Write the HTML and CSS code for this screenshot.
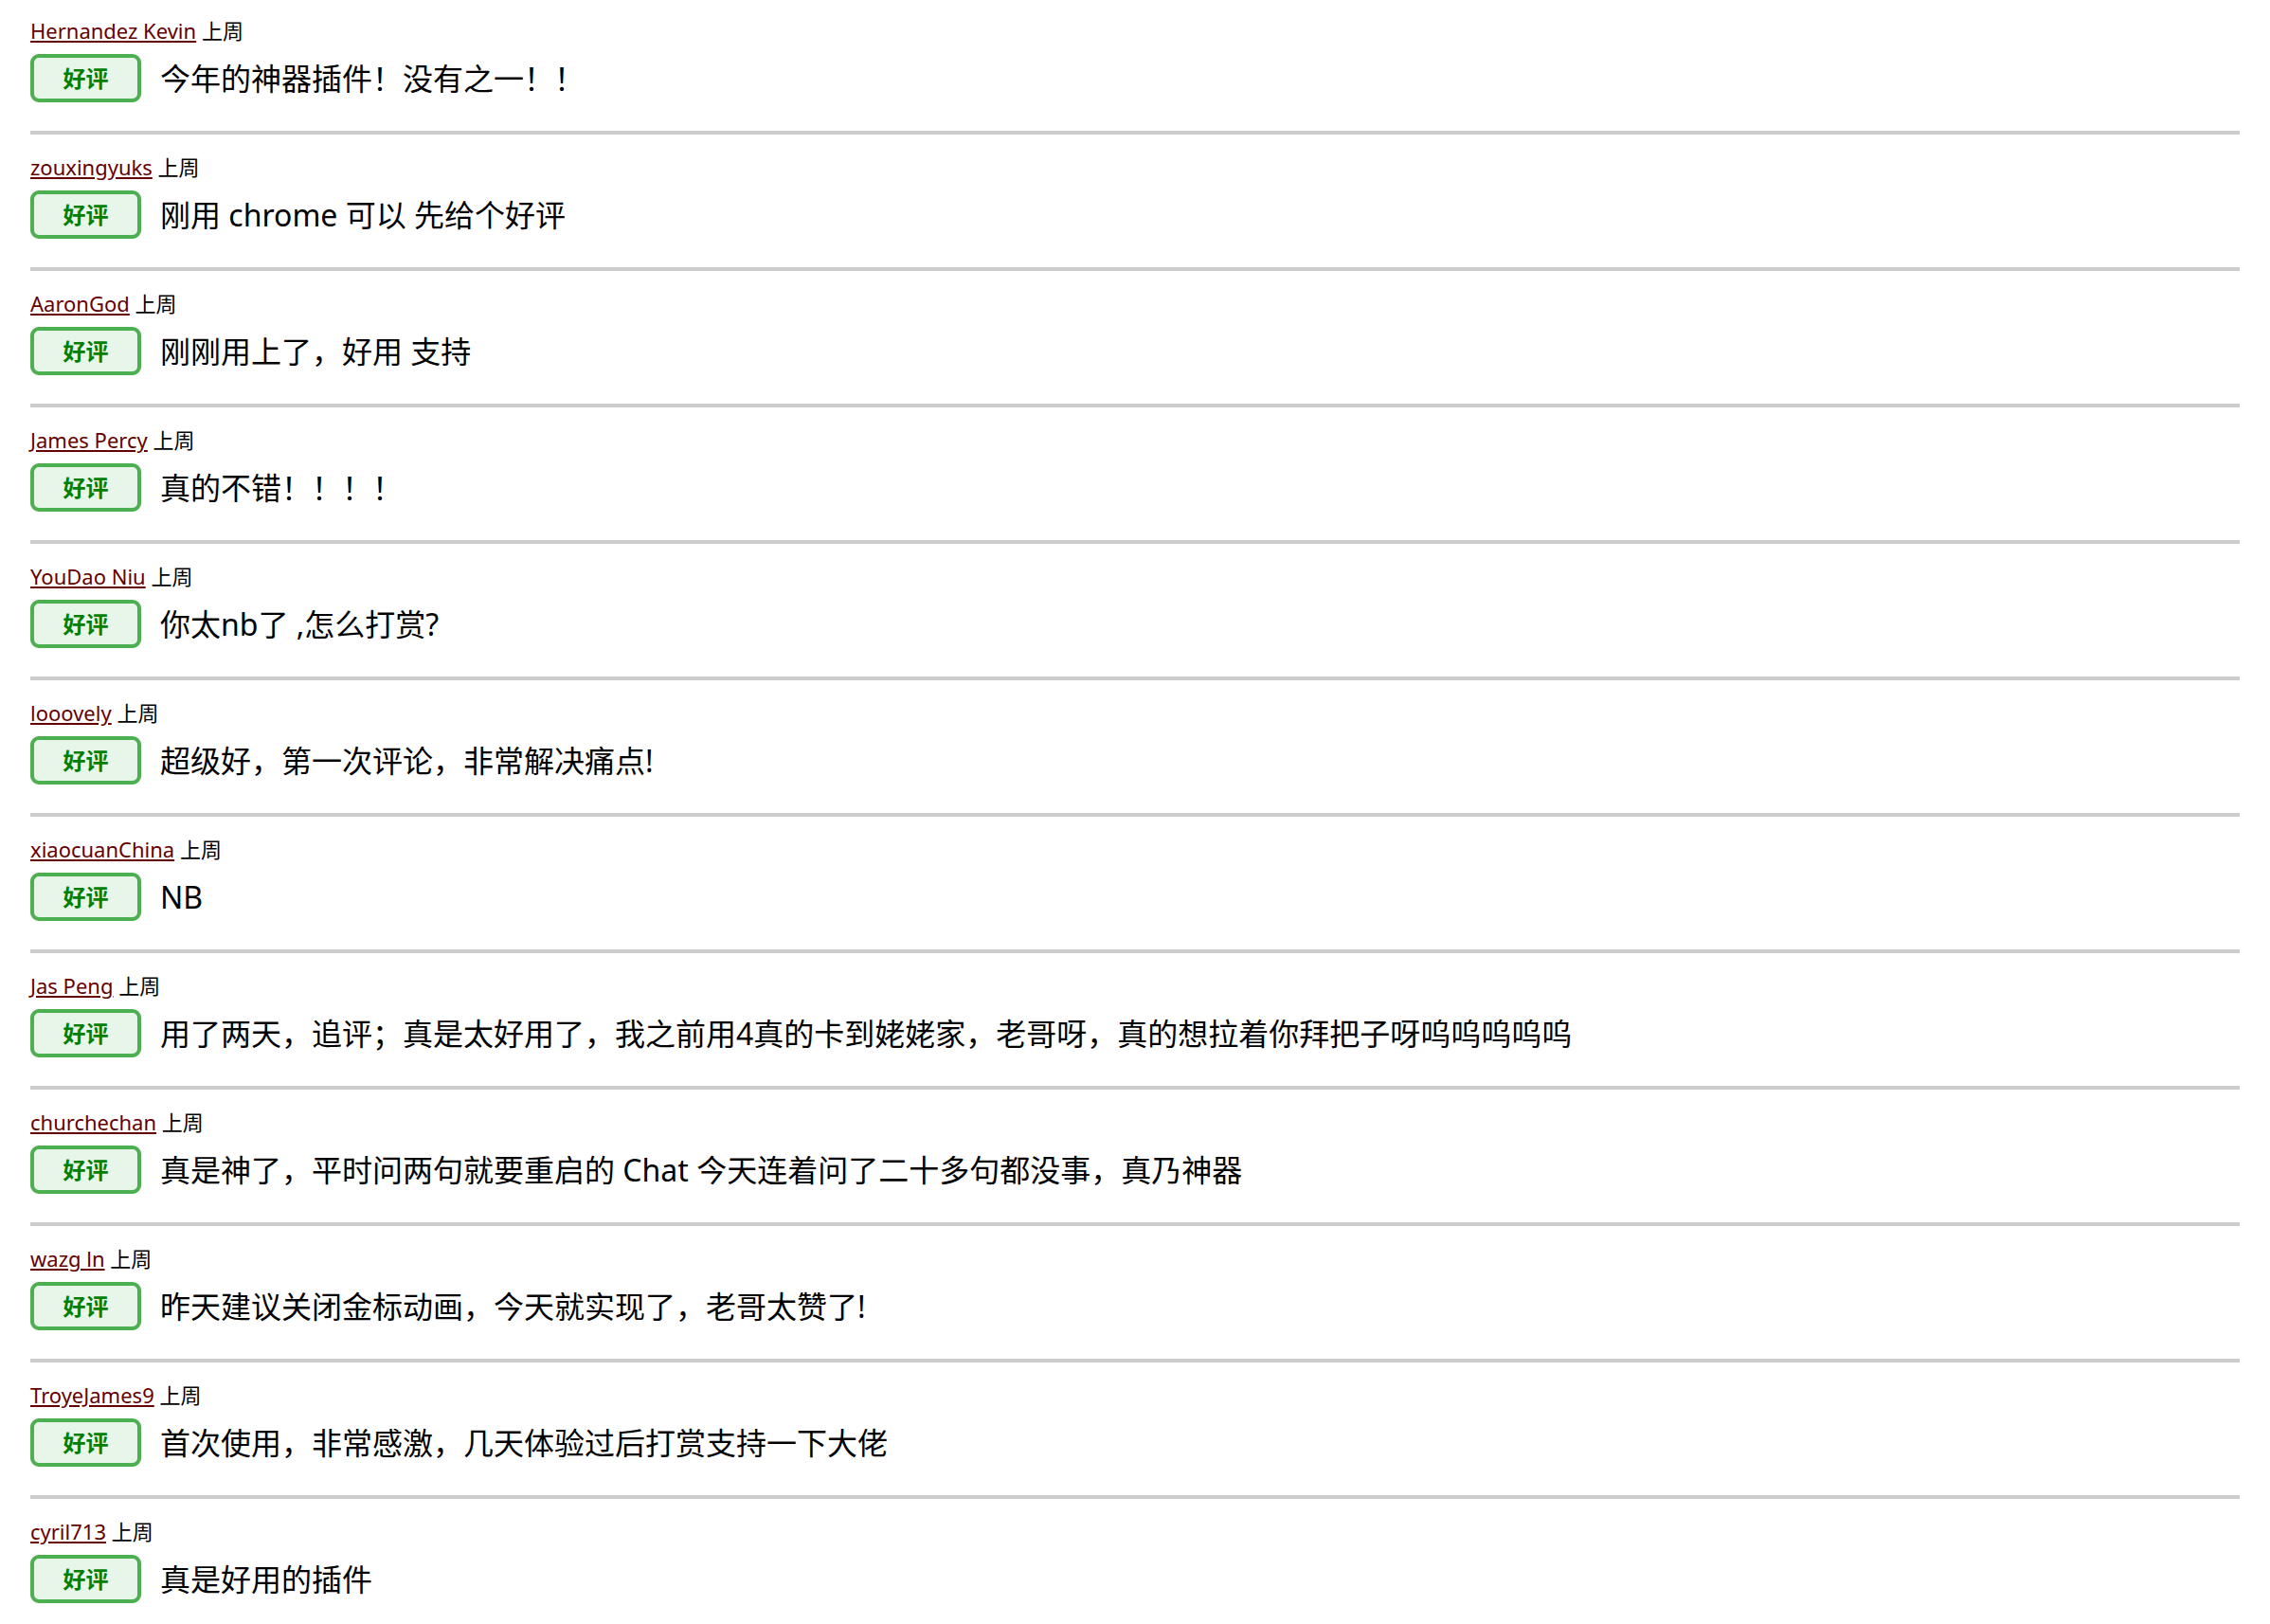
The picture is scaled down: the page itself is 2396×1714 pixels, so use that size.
FILE: index.html
```html
<!DOCTYPE html>
<html lang="zh-CN">
<head>
<meta charset="utf-8">
<title>评价</title>
<link rel="stylesheet" href="styles.css">
</head>
<body>
<div class="reviews">
  <div class="review">
    <div class="meta"><a class="author" href="#">Hernandez Kevin</a> <span class="time">上周</span></div>
    <div class="body"><span class="badge">好评</span><span class="text">今年的神器插件！没有之一！！</span></div>
  </div>
  <div class="review">
    <div class="meta"><a class="author" href="#">zouxingyuks</a> <span class="time">上周</span></div>
    <div class="body"><span class="badge">好评</span><span class="text">刚用 chrome 可以 先给个好评</span></div>
  </div>
  <div class="review">
    <div class="meta"><a class="author" href="#">AaronGod</a> <span class="time">上周</span></div>
    <div class="body"><span class="badge">好评</span><span class="text">刚刚用上了，好用 支持</span></div>
  </div>
  <div class="review">
    <div class="meta"><a class="author" href="#">James Percy</a> <span class="time">上周</span></div>
    <div class="body"><span class="badge">好评</span><span class="text">真的不错！！！！</span></div>
  </div>
  <div class="review">
    <div class="meta"><a class="author" href="#">YouDao Niu</a> <span class="time">上周</span></div>
    <div class="body"><span class="badge">好评</span><span class="text">你太nb了 ,怎么打赏?</span></div>
  </div>
  <div class="review">
    <div class="meta"><a class="author" href="#">looovely</a> <span class="time">上周</span></div>
    <div class="body"><span class="badge">好评</span><span class="text">超级好，第一次评论，非常解决痛点!</span></div>
  </div>
  <div class="review">
    <div class="meta"><a class="author" href="#">xiaocuanChina</a> <span class="time">上周</span></div>
    <div class="body"><span class="badge">好评</span><span class="text">NB</span></div>
  </div>
  <div class="review">
    <div class="meta"><a class="author" href="#">Jas Peng</a> <span class="time">上周</span></div>
    <div class="body"><span class="badge">好评</span><span class="text">用了两天，追评；真是太好用了，我之前用4真的卡到姥姥家，老哥呀，真的想拉着你拜把子呀呜呜呜呜呜</span></div>
  </div>
  <div class="review">
    <div class="meta"><a class="author" href="#">churchechan</a> <span class="time">上周</span></div>
    <div class="body"><span class="badge">好评</span><span class="text">真是神了，平时问两句就要重启的 Chat 今天连着问了二十多句都没事，真乃神器</span></div>
  </div>
  <div class="review">
    <div class="meta"><a class="author" href="#">wazg ln</a> <span class="time">上周</span></div>
    <div class="body"><span class="badge">好评</span><span class="text">昨天建议关闭金标动画，今天就实现了，老哥太赞了!</span></div>
  </div>
  <div class="review">
    <div class="meta"><a class="author" href="#">TroyeJames9</a> <span class="time">上周</span></div>
    <div class="body"><span class="badge">好评</span><span class="text">首次使用，非常感激，几天体验过后打赏支持一下大佬</span></div>
  </div>
  <div class="review last">
    <div class="meta"><a class="author" href="#">cyril713</a> <span class="time">上周</span></div>
    <div class="body"><span class="badge">好评</span><span class="text">真是好用的插件</span></div>
  </div>
</div>
</body>
</html>
```
FILE: styles.css
```css
html, body {
  margin: 0;
  padding: 0;
  background: #ffffff;
}

body {
  font-family: "Noto Sans", "Noto Sans CJK SC", sans-serif;
  color: #000000;
}

.reviews {
  padding: 0 32px;
}

.review {
  padding: 19px 0 30px;
  border-bottom: 4px solid #cccccc;
}

.review:first-child {
  padding-top: 17px;
}

.review.last {
  border-bottom: none;
}

.meta {
  font-size: 22px;
  line-height: 30px;
  height: 30px;
  white-space: nowrap;
}

.author {
  color: #660000;
  text-decoration: underline;
}

.time {
  color: #000000;
}

.body {
  display: flex;
  align-items: center;
  gap: 20px;
  margin-top: 10px;
}

.badge {
  box-sizing: border-box;
  width: 117px;
  height: 51px;
  flex: none;
  display: flex;
  align-items: center;
  justify-content: center;
  padding-bottom: 2px;
  border: 4px solid #4caf50;
  border-radius: 9px;
  background: #e8f5e9;
  color: #008000;
  font-weight: bold;
  font-size: 24px;
}

.text {
  font-size: 32px;
  line-height: 42px;
  color: #000000;
}
```
